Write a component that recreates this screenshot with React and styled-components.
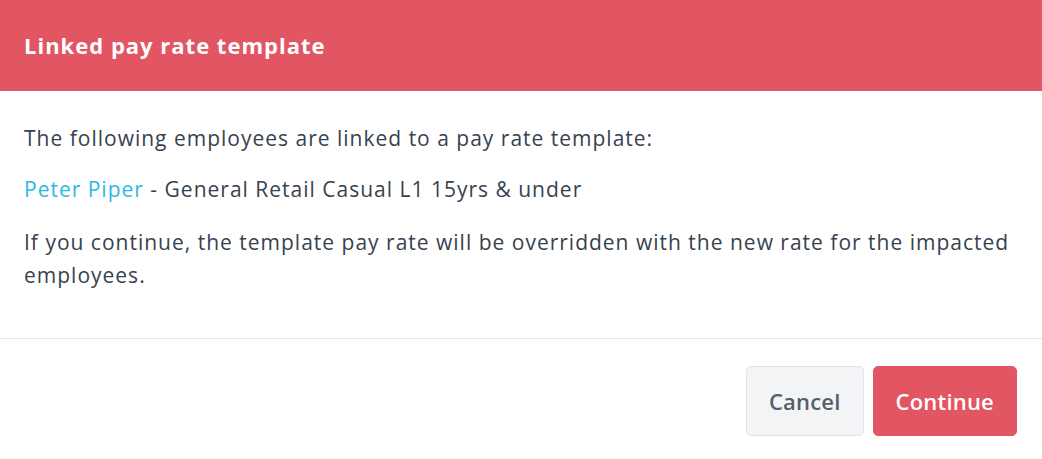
import React from "react";
import styled, { createGlobalStyle } from "styled-components";

const GlobalStyle = createGlobalStyle`
  * { box-sizing: border-box; margin: 0; padding: 0; }
  body {
    background: #ffffff;
    font-family: "Open Sans", Lato, sans-serif;
    color: #333f4d;
  }
`;

const Modal = styled.div`
  width: 1042px;
  display: flex;
  flex-direction: column;
  background: #ffffff;
`;

const Header = styled.div`
  height: 91px;
  flex-shrink: 0;
  background: #e25563;
  display: flex;
  align-items: center;
  padding: 0 24px;
`;

const Title = styled.h1`
  font-size: 22px;
  font-weight: 700;
  letter-spacing: 1px;
  color: #ffffff;
  margin-top: -2px;
`;

const Body = styled.div`
  padding: 31px 24px 46px;
  border-bottom: 1px solid #e3e6ea;
  display: flex;
  flex-direction: column;
  gap: 18px;
`;

const Para = styled.p`
  font-size: 21px;
  line-height: 33px;
  letter-spacing: 1px;
  color: #37424f;
  margin-top: ${(p) => (p.$spaced ? "2px" : "0")};
`;

const Link = styled.a`
  color: #2eb8e6;
  text-decoration: none;
`;

const Footer = styled.div`
  display: flex;
  justify-content: flex-end;
  gap: 9px;
  padding: 27px 25px;
`;

const Button = styled.button`
  height: 70px;
  padding: 0 22px;
  border-radius: 5px;
  font-family: "Open Sans", Lato, sans-serif;
  font-size: 22px;
  font-weight: 600;
  letter-spacing: 0.2px;
  cursor: pointer;
  border: 1px solid ${(p) => (p.$primary ? "#e25563" : "#dfe3e8")};
  background: ${(p) => (p.$primary ? "#e25563" : "#f3f4f6")};
  color: ${(p) => (p.$primary ? "#ffffff" : "#545f6b")};
`;

export default function App() {
  return (
    <>
      <GlobalStyle />
      <Modal>
        <Header>
          <Title>Linked pay rate template</Title>
        </Header>
        <Body>
          <Para>The following employees are linked to a pay rate template:</Para>
          <Para>
            <Link href="#">Peter Piper</Link> - General Retail Casual L1 15yrs &amp; under
          </Para>
          <Para $spaced>
            If you continue, the template pay rate will be overridden with the new rate for the impacted employees.
          </Para>
        </Body>
        <Footer>
          <Button>Cancel</Button>
          <Button $primary>Continue</Button>
        </Footer>
      </Modal>
    </>
  );
}
